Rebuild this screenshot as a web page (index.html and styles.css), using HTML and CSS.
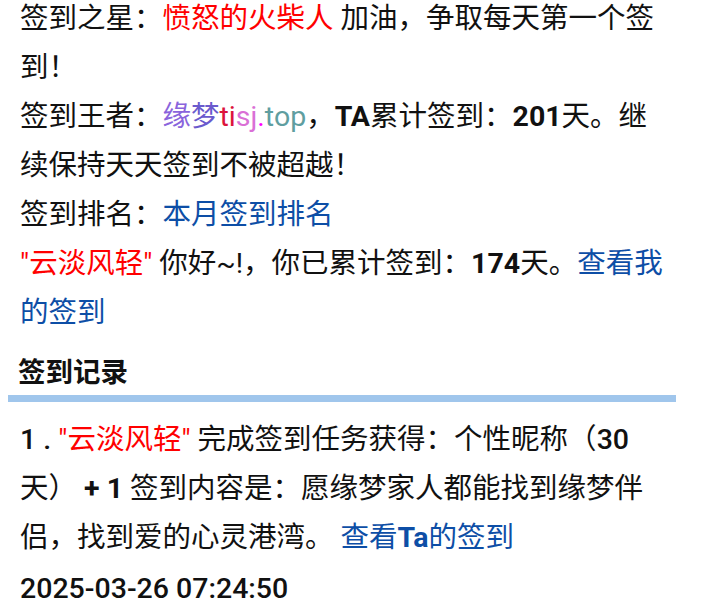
FILE: index.html
```
<!DOCTYPE html>
<html lang="zh-CN">
<head>
    <meta charset="UTF-8">
    <meta name="viewport" content="width=device-width, initial-scale=1.0">
    <title>签到</title>
    <link rel="stylesheet" href="styles.css">
</head>
<body>
    <div class="page">
        <div class="info">
            <p>签到之星：<span class="red">愤怒的火柴人</span> 加油，争取每天第一个签到！</p>
            <p>签到王者：<span class="c1">缘</span><span class="c2">梦</span><span class="c3">ti</span><span class="c4">sj</span><span class="c5">.</span><span class="c6">top</span>，<b>TA</b>累计签到：<b>201</b>天。继续保持天天签到不被超越！</p>
            <p>签到排名：<a href="#">本月签到排名</a></p>
            <p><span class="red">"云淡风轻"</span> 你好~!，你已累计签到：<b>174</b>天。<a href="#">查看我的签到</a></p>
        </div>
        <h2 class="title">签到记录</h2>
        <ul class="records">
            <li>
                <span class="num">1 .</span> <span class="red">"云淡风轻"</span> 完成签到任务获得：个性昵称（<span class="num">30</span>天） <b>+ 1</b> 签到内容是：愿缘梦家人都能找到缘梦伴侣，找到爱的心灵港湾。 <a href="#">查看<b>Ta</b>的签到</a>
                <div class="date">2025-03-26 07:24:50</div>
            </li>
        </ul>
    </div>
</body>
</html>
```

FILE: styles.css
```
body {
    margin: 0;
    background: #fff;
    color: #111;
    font-family: Roboto, "Noto Sans CJK SC", sans-serif;
    font-size: 28.5px;
    line-height: 49px;
}
.page {
    width: 668px;
    margin: -6px 0 0 8px;
}
.info {
    padding: 0 12px;
}
.info p {
    margin: 0;
}
.red {
    color: #ff0000;
}
a {
    color: #0d4ea6;
    text-decoration: none;
}
b {
    font-weight: bold;
}
.c1 { color: #8a64dc; }
.c2 { color: #6a5acd; }
.c3 { color: #dc143c; }
.c4 { color: #da70d6; }
.c5 { color: #ff00ff; }
.c6 { color: #5f9ea0; }
.title {
    margin: 14px 0 0 10px;
    font-size: 27.5px;
    font-weight: bold;
    line-height: 44px;
}
.records {
    list-style: none;
    margin: 0;
    padding: 13px 26px 0 12px;
    border-top: 7px solid #a0c6ec;
}
.num {
    font-weight: 500;
}
.date {
    margin-top: 2px;
    font-weight: 500;
}
```
